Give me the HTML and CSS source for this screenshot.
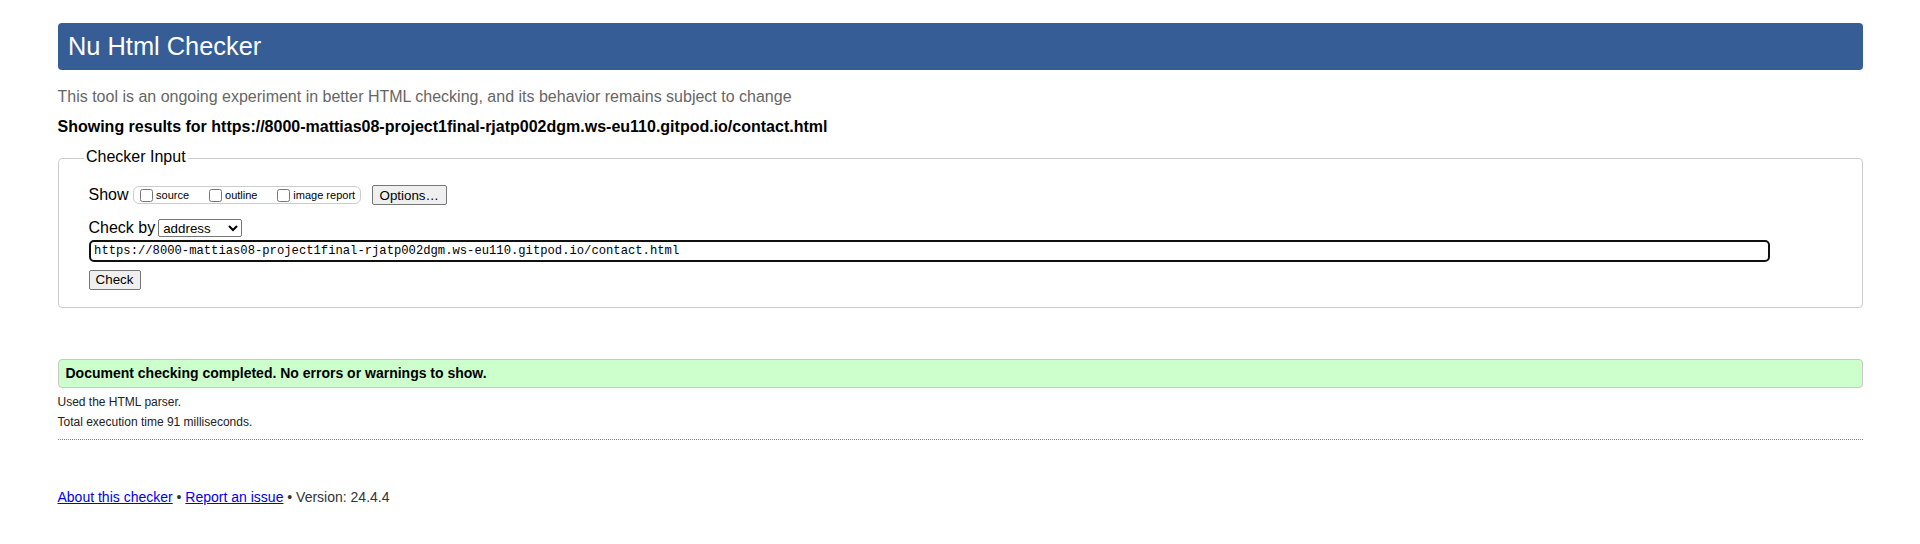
FILE: index.html
```html
<!DOCTYPE html>
<html lang="en">
<head>
<meta charset="utf-8">
<title>Showing results for contact.html - Nu Html Checker</title>
<link rel="stylesheet" href="styles.css">
</head>
<body>
<header class="banner"><h1 class="title">Nu Html Checker</h1></header>
<p class="intro">This tool is an ongoing experiment in better HTML checking, and its behavior remains subject to change</p>
<h2 class="results-for">Showing results for https://8000-mattias08-project1final-rjatp002dgm.ws-eu110.gitpod.io/contact.html</h2>
<form class="checker" onsubmit="return false">
  <fieldset class="input-set">
    <legend class="input-legend">Checker Input</legend>
    <div class="row row-show">
      <span class="row-label">Show</span>
      <fieldset class="show-set">
        <label class="opt"><input class="cb" type="checkbox"><span>source</span></label>
        <label class="opt"><input class="cb" type="checkbox"><span>outline</span></label>
        <label class="opt"><input class="cb" type="checkbox"><span>image report</span></label>
      </fieldset>
      <button class="btn btn-options" type="button">Options…</button>
    </div>
    <div class="row row-by">
      <label class="row-label">Check by</label>
      <select class="sel"><option>address</option></select>
    </div>
    <div class="url-field">https://8000-mattias08-project1final-rjatp002dgm.ws-eu110.gitpod.io/contact.html</div>
    <button class="btn btn-check" type="button">Check</button>
  </fieldset>
</form>
<p class="success">Document checking completed. No errors or warnings to show.</p>
<div class="details">
  <p class="detail">Used the HTML parser.</p>
  <p class="detail detail-next">Total execution time 91 milliseconds.</p>
</div>
<hr class="sep">
<p class="footer"><a class="flink" href="#">About this checker</a> • <a class="flink" href="#">Report an issue</a> • Version: 24.4.4</p>
</body>
</html>
```

FILE: styles.css
```css
html {
  background: #fff;
}
body {
  margin: 0;
  padding: 23px 57.5px 0;
  font-family: "Liberation Sans", Arial, sans-serif;
  color: #000;
}
.banner {
  background: #365d95;
  border-radius: 4px;
  padding: 9px 10.5px;
}
.title {
  margin: 0;
  font-size: 25.4px;
  line-height: 29px;
  font-weight: normal;
  color: #fff;
}
.intro {
  margin: 18px 0 0;
  font-size: 16px;
  line-height: 18px;
  color: #666;
}
.results-for {
  margin: 12px 0 0;
  font-size: 16px;
  line-height: 18px;
  font-weight: bold;
}
.checker {
  margin: 12px 0 0;
}
.input-set {
  margin: 0;
  padding: 17.35px 28px 17px 30px;
  border: 1px solid #ccc;
  border-radius: 4px;
  min-inline-size: 0;
}
.input-legend {
  margin-left: -4.5px;
  padding: 0 2px 2px;
  font-size: 16px;
  line-height: 18px;
}
.row {
  display: flex;
  align-items: center;
  height: 20px;
}
.row-label {
  font-size: 16px;
  line-height: 18px;
}
.row-show .row-label {
  margin-right: 4.5px;
}
.show-set {
  display: flex;
  align-items: center;
  gap: 19.5px;
  box-sizing: border-box;
  height: 18px;
  margin: 0;
  padding: 0 5px 0 5.7px;
  border: 1px solid #ccc;
  border-radius: 6px;
  min-inline-size: 0;
}
.opt {
  display: flex;
  align-items: center;
  gap: 3.4px;
  font-size: 11px;
  line-height: 13px;
  color: #000;
}
.cb {
  width: 13px;
  height: 13px;
  margin: 0;
}
.btn {
  box-sizing: border-box;
  height: 20px;
  padding: 0;
  font-family: "Liberation Sans", Arial, sans-serif;
  font-size: 13.333px;
  color: #000;
  background: #efefef;
  border: 1px solid #767676;
  border-radius: 2px;
  text-align: center;
}
.btn-options {
  width: 75px;
  margin-left: 10.6px;
}
.row-by {
  margin-top: 13px;
}
.row-by .row-label {
  margin-right: 3px;
}
.sel {
  box-sizing: border-box;
  width: 84px;
  height: 18px;
  margin: 0;
  font-family: "Liberation Sans", Arial, sans-serif;
  font-size: 13.333px;
  color: #000;
  background: #fff;
  border: 1px solid #767676;
  border-radius: 2px;
}
.url-field {
  box-sizing: border-box;
  width: 1681px;
  height: 22px;
  margin-top: 1.5px;
  padding: 0 0 0 3.6px;
  border: 2px solid #101010;
  border-radius: 5px;
  font-family: "Liberation Mono", "DejaVu Sans Mono", monospace;
  font-size: 12.2px;
  line-height: 18px;
  color: #000;
  white-space: nowrap;
  overflow: hidden;
}
.btn-check {
  display: block;
  width: 52px;
  margin-top: 8px;
}
.success {
  margin: 51px 0 0;
  padding: 5.5px 7px;
  background: #ccffcc;
  border: 1px solid #c8c8c8;
  border-radius: 4px;
  font-size: 14px;
  line-height: 16px;
  font-weight: bold;
}
.details {
  margin-top: 7px;
}
.detail {
  margin: 0;
  font-size: 12px;
  line-height: 14px;
  color: #222;
}
.detail-next {
  margin-top: 6.3px;
}
.sep {
  height: 0;
  margin: 10px 0 0;
  border: 0;
  border-top: 1px dotted #888;
}
.footer {
  margin: 49px 0 0;
  font-size: 14px;
  line-height: 16px;
  color: #333;
}
.flink {
  color: #0000ee;
}
```
